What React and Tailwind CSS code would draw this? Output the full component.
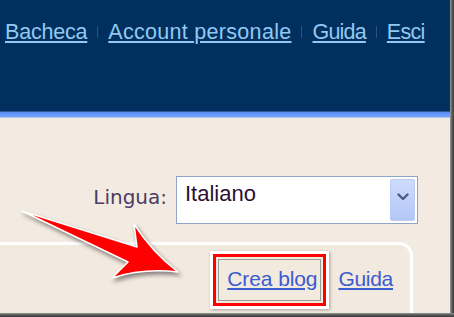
import React from "react";

export default function App() {
  const headFont = { fontFamily: '"Liberation Sans", Arial, sans-serif' };
  return (
    <div className="relative w-[454px] h-[317px] overflow-hidden flex flex-col bg-[#f3ebe1]">
      <div className="flex flex-1 min-h-0">
        <div className="flex-1 flex flex-col min-w-0">
          {/* Header */}
          <div className="h-[111px] bg-[#01305f] flex items-start pl-[5px] pt-[19px]">
            <div
              className="flex items-center gap-[10px] text-[21.5px] leading-[26px] text-[#93c8f2]"
              style={headFont}
            >
              <a className="underline underline-offset-[2px] tracking-[-0.2px]">Bacheca</a>
              <span className="w-px h-[12px] bg-[#2c5080]" />
              <a className="underline underline-offset-[2px] tracking-[0.3px]">Account personale</a>
              <span className="w-px h-[12px] bg-[#2c5080]" />
              <a className="underline underline-offset-[2px] tracking-[-0.8px]">Guida</a>
              <span className="w-px h-[12px] bg-[#2c5080]" />
              <a className="underline underline-offset-[2px] tracking-[-0.7px]">Esci</a>
            </div>
          </div>
          {/* Stripe */}
          <div className="h-px bg-[#2f5894]" />
          <div className="h-[2px] bg-[#5d8ff7]" />
          <div className="h-[3px] bg-[#6f9eff]" />
          <div className="h-px bg-[#b9cbe6]" />
          <div className="h-px bg-[#e9e6e6]" />
          {/* Beige content */}
          <div className="flex-1 flex flex-col bg-[#f3ebe1]">
            <div className="flex justify-end items-start pr-[32px] mt-[57px] gap-[9px]">
              <span
                className="mt-[9px] text-[20px] leading-[24px] text-[#4a3d64]"
                style={{ fontFamily: '"DejaVu Sans", Verdana, sans-serif' }}
              >
                Lingua:
              </span>
              <div className="w-[242px] h-[48px] border border-[#8ea6c4] bg-white flex">
                <span
                  className="flex-1 pl-[8px] pt-[4px] text-[22px] leading-[26px] text-[#2b0f33]"
                  style={headFont}
                >
                  Italiano
                </span>
                <div className="m-[2px] w-[25px] rounded-[2px] border border-[#b9cbf3] bg-gradient-to-b from-[#cddbfb] to-[#b3c7f7] flex justify-center pt-[13px]">
                  <svg width="12" height="8" viewBox="0 0 12 8">
                    <path d="M1.5 1.5 L6 6 L10.5 1.5" fill="none" stroke="#4b5d82" strokeWidth="2.4" strokeLinecap="round" strokeLinejoin="round" />
                  </svg>
                </div>
              </div>
            </div>
            {/* Panel */}
            <div className="mt-[18px] w-[413px] flex-1 border-t-[3px] border-r-[3px] border-white rounded-tr-[14px] bg-[#f2e9df] flex justify-end items-start pr-[17px] pt-[22px]">
              <div className="flex items-center text-[21px] leading-[24px]" style={headFont}>
                <span className="relative">
                  <span className="absolute left-[-17px] top-[-16px] w-[119px] h-[58px] border-[3px] border-white shadow-[1px_1px_3px_rgba(0,0,0,0.3)]">
                    <span className="block w-full h-full border-[3px] border-[#ff0000] p-[2px]">
                      <span className="block w-full h-full border border-[#9a9a96]" />
                    </span>
                  </span>
                  <a className="relative text-[#3b5bd0] underline underline-offset-[2px] tracking-[-0.1px]">Crea blog</a>
                </span>
                <span className="mx-[9px] w-[3px] h-[3px] rounded-full bg-[#7a7670]" />
                <a className="text-[#3b5bd0] underline underline-offset-[2px] tracking-[-0.3px]">Guida</a>
              </div>
            </div>
          </div>
        </div>
        {/* right frame shadow */}
        <div className="w-[4px] bg-gradient-to-r from-[#a0a0a0] via-[#5a5a5a] to-[#3c3c3c]" />
      </div>
      {/* bottom frame shadow */}
      <div className="h-[4px] bg-gradient-to-b from-[#9a9a9a] via-[#555555] to-[#3a3a3a]" />

      {/* Annotation arrow */}
      <svg
        className="absolute left-0 top-0 pointer-events-none drop-shadow-[2px_3px_2px_rgba(0,0,0,0.45)]"
        width="454"
        height="317"
        viewBox="0 0 454 317"
      >
        <path
          d="M22 211 L137 247 L134 224 Q152 252 178 272 Q143 268 112 278 L128 262 Z"
          fill="#ff0000"
          stroke="#ffffff"
          strokeWidth="1.5"
          strokeLinejoin="round"
        />
      </svg>
    </div>
  );
}
